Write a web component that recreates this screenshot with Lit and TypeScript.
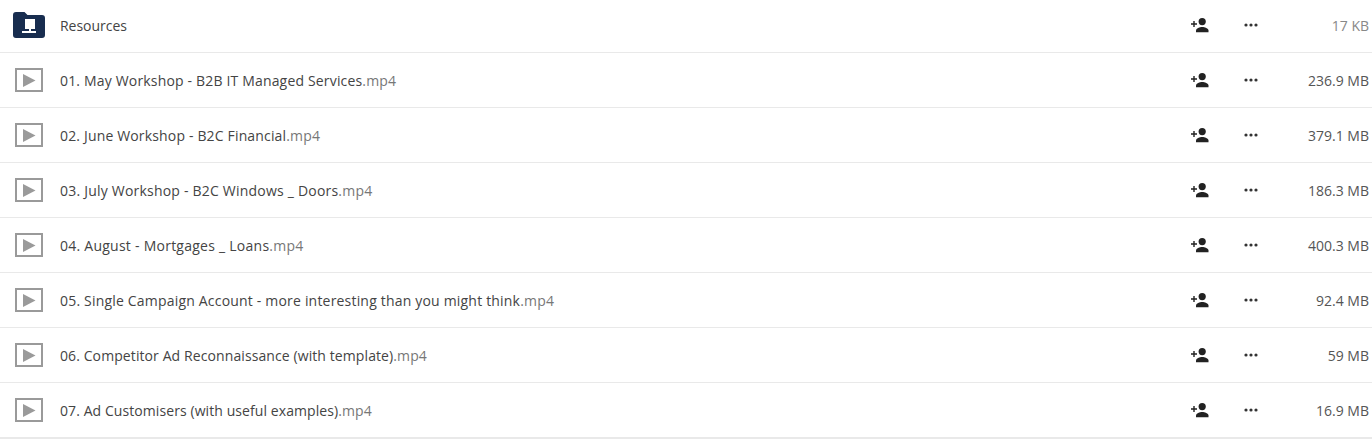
import { LitElement, html, css, svg } from "lit";
import { customElement } from "lit/decorators.js";

const rows = [
  { name: "Resources", ext: "", size: "17 KB", folder: true, track: -0.03 },
  { name: "01. May Workshop - B2B IT Managed Services", ext: ".mp4", size: "236.9 MB", track: 0.17 },
  { name: "02. June Workshop - B2C Financial", ext: ".mp4", size: "379.1 MB", track: 0.16 },
  { name: "03. July Workshop - B2C Windows _ Doors", ext: ".mp4", size: "186.3 MB", track: 0.21 },
  { name: "04. August - Mortgages _ Loans", ext: ".mp4", size: "400.3 MB", track: 0.25 },
  { name: "05. Single Campaign Account - more interesting than you might think", ext: ".mp4", size: "92.4 MB", track: 0.19 },
  { name: "06. Competitor Ad Reconnaissance (with template)", ext: ".mp4", size: "59 MB", track: 0.095 },
  { name: "07. Ad Customisers (with useful examples)", ext: ".mp4", size: "16.9 MB", track: 0.08 },
];

const folderIcon = svg`<svg width="32" height="26" viewBox="0 0 32 26">
  <path fill="#182d4f" d="M0 3a3 3 0 0 1 3-3h8.500l3 3H29a3 3 0 0 1 3 3v17a3 3 0 0 1-3 3H3a3 3 0 0 1-3-3z"/>
  <path fill="#fff" d="M12 7h10V17H12zM16 17h2V19h5v2H9v-2h7z"/>
</svg>`;

const videoIcon = svg`<svg width="28" height="24" viewBox="0 0 28 24">
  <rect x="1" y="1" width="26" height="22" fill="none" stroke="#9a9a9a" stroke-width="2"/>
  <path fill="#9a9a9a" d="M8 6L20.500 12.500 8 19z"/>
</svg>`;

const shareIcon = svg`<svg width="20" height="16" viewBox="0 0 20 16">
  <path fill="#222" d="M1 6.300h2.300V4h1.400v2.300H7v1.400H4.700V10H3.300V7.700H1z"/>
  <circle cx="12.200" cy="4.600" r="3.600" fill="#222"/>
  <path fill="#222" d="M6 15.200v-1.700C6 11.500 9.800 10 12.200 10s6.300 1.500 6.300 3.500v1.700z"/>
</svg>`;

const moreIcon = svg`<svg width="14" height="4" viewBox="0 0 14 4">
  <circle cx="2" cy="2" r="1.600" fill="#333"/>
  <circle cx="7" cy="2" r="1.600" fill="#333"/>
  <circle cx="12" cy="2" r="1.600" fill="#333"/>
</svg>`;

@customElement("app-root")
export class AppRoot extends LitElement {
  static styles = css`
    :host {
      display: block;
      height: 441px;
      overflow: hidden;
      background: #fff;
      font-family: "Open Sans", "Liberation Sans", sans-serif;
      font-size: 14px;
      color: #444;
    }
    .list {
      margin-top: -2px;
    }
    .row {
      display: grid;
      grid-template-columns: 60px 1fr 20px 34px 14px 114px;
      align-items: center;
      height: 54px;
      border-bottom: 1px solid #e9e9e9;
    }
    .row:last-child {
      border-bottom: 2px solid #e9e9e9;
    }
    .icon {
      display: flex;
      width: 32px;
      margin-left: 13px;
    }
    .icon.video {
      width: 28px;
      margin-left: 15px;
    }
    .icon svg,
    .cell svg {
      display: block;
    }
    .name {
      white-space: nowrap;
    }
    .ext {
      color: #777;
    }
    .size {
      justify-self: end;
      padding-right: 3px;
      color: #555;
    }
    .size.muted {
      color: #888;
    }
  `;

  render() {
    return html`<div class="list">
      ${rows.map(
        (r) => html`<div class="row">
          <div class="icon ${r.folder ? "" : "video"}">${r.folder ? folderIcon : videoIcon}</div>
          <div class="name" style="letter-spacing: ${r.track}px">${r.name}<span class="ext">${r.ext}</span></div>
          <div class="cell">${shareIcon}</div>
          <div></div>
          <div class="cell">${moreIcon}</div>
          <div class="size ${r.folder ? "muted" : ""}">${r.size}</div>
        </div>`
      )}
    </div>`;
  }
}
